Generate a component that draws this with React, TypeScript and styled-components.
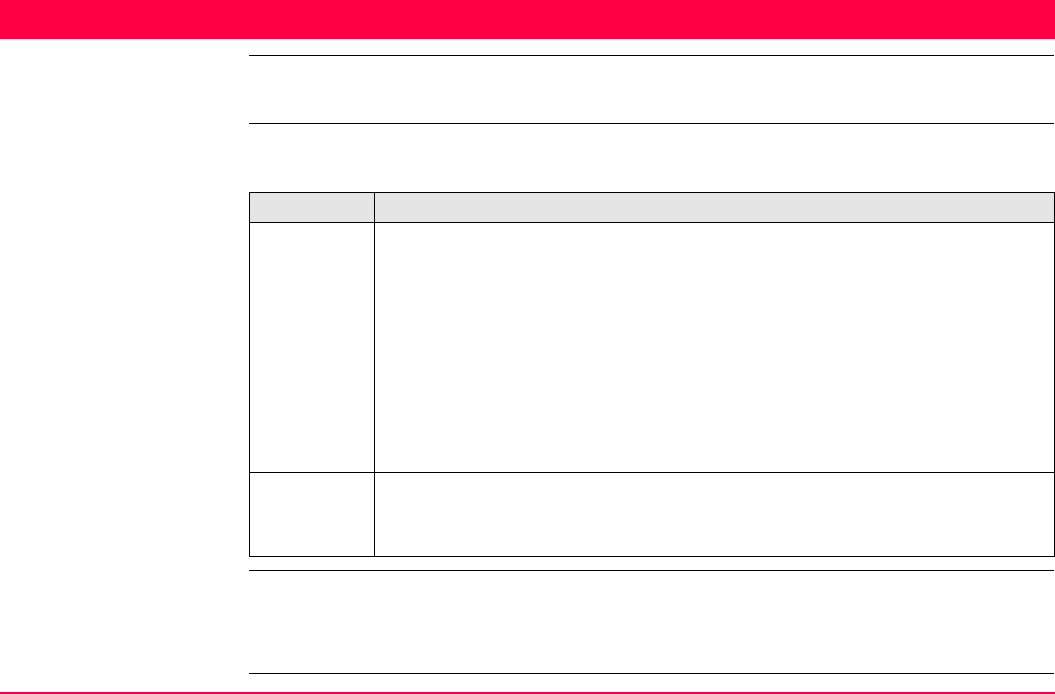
import React from "react";
import styled, { createGlobalStyle } from "styled-components";

const GlobalStyle = createGlobalStyle`
    html, body {
        margin: 0;
        padding: 0;
        background: #ffffff;
        font-family: "Liberation Sans", Arial, sans-serif;
    }
`

const Page = styled.div`
    width: 1055px;
    height: 694px;
    display: flex;
    flex-direction: column;
    overflow: hidden;
`

const TopBar = styled.header`
    height: 39px;
    background: #ff0044;
    flex-shrink: 0;
`

const Main = styled.main`
    padding: 16px 0 0 249px;
    display: flex;
    flex-direction: column;
`

const RuledBlock = styled.section<{ $height: number; $gap: number }>`
    box-sizing: border-box;
    width: 805px;
    height: ${({ $height }) => $height}px;
    margin-top: ${({ $gap }) => $gap}px;
    border-top: 1px solid #000;
    border-bottom: 1px solid #000;
`

const Table = styled.div`
    box-sizing: border-box;
    width: 806px;
    margin-top: 68px;
    display: grid;
    grid-template-columns: 125px 680px;
    border-top: 1px solid #000;
    border-left: 1px solid #000;
`

const Cell = styled.div<{ $head?: boolean; $height: number }>`
    box-sizing: border-box;
    height: ${({ $height }) => $height}px;
    background: ${({ $head }) => ($head ? "#e5e5e5" : "#ffffff")};
    border-right: 1px solid #000;
    border-bottom: 1px solid #000;
    font-size: 12px;
    padding: 6px 8px;
`

const BottomBar = styled.footer`
    height: 2px;
    margin-top: 18px;
    background: #f5004a;
    flex-shrink: 0;
`

const rows = [
    { head: true, height: 30 },
    { head: false, height: 250 },
    { head: false, height: 84 },
]

export default function App() {
    return (
        <>
            <GlobalStyle />
            <Page>
                <TopBar />
                <Main>
                    <RuledBlock $height={69} $gap={0} />
                    <Table>
                        {rows.map(({ head, height }, index) => (
                            <React.Fragment key={index}>
                                <Cell $head={head} $height={height} />
                                <Cell $head={head} $height={height} />
                            </React.Fragment>
                        ))}
                    </Table>
                    <RuledBlock $height={104} $gap={13} />
                </Main>
                <BottomBar />
            </Page>
        </>
    );
}
